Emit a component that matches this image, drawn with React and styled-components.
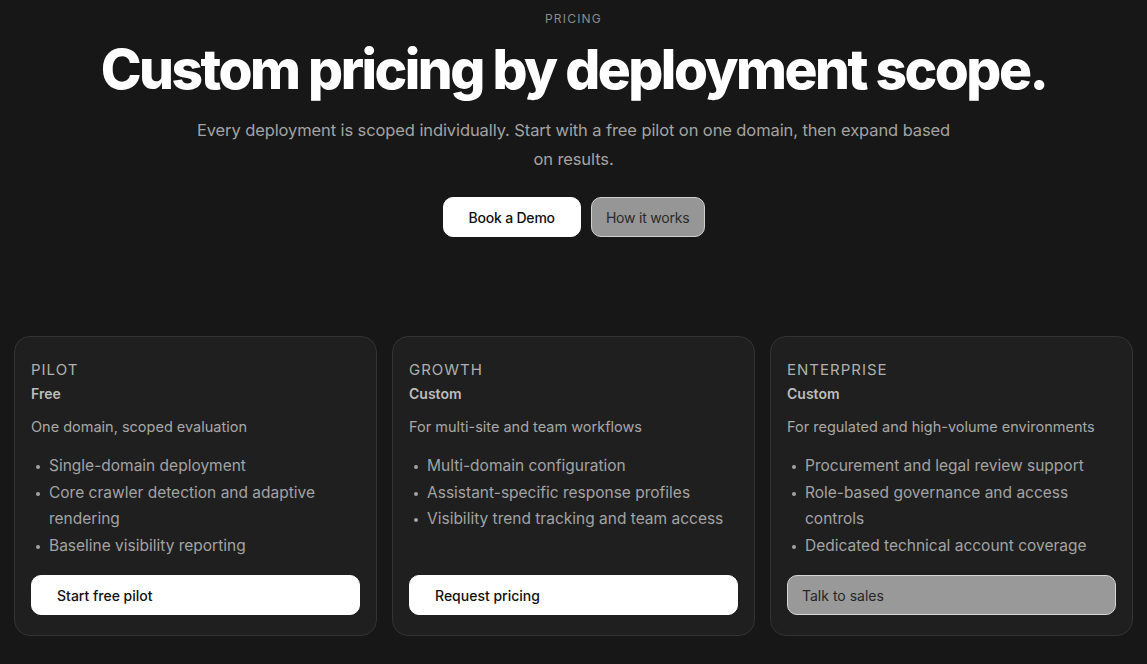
import React from "react";
import styled, { createGlobalStyle } from "styled-components";

const Global = createGlobalStyle`
  html, body { margin: 0; padding: 0; background: #171717; }
  body { font-family: Inter, "Noto Sans", sans-serif; -webkit-font-smoothing: antialiased; }
  * { box-sizing: border-box; }
`;

const Page = styled.main`
  width: 1147px;
  min-height: 664px;
  background: #171717;
  padding: 11px 14px 28px;
  display: flex;
  flex-direction: column;
  align-items: center;
`;

const Eyebrow = styled.div`
  font-family: Inter, sans-serif;
  font-size: 12px;
  line-height: 16px;
  letter-spacing: 1.2px;
  color: #8c8c8c;
  text-transform: uppercase;
`;

const Headline = styled.h1`
  margin: 11px 0 0;
  font-family: Inter, sans-serif;
  font-weight: 800;
  font-size: 55px;
  line-height: 62px;
  letter-spacing: -2.5px;
  color: #ffffff;
  text-align: center;
`;

const Lead = styled.p`
  margin: 16px 0 0;
  width: 762px;
  font-family: Inter, sans-serif;
  font-size: 16.5px;
  line-height: 29px;
  letter-spacing: -0.1px;
  color: #a3a3a3;
  text-align: center;
`;

const Actions = styled.div`
  display: flex;
  gap: 10px;
  margin-top: 23px;
`;

const HeroButton = styled.button`
  height: 40px;
  padding: 0 ${(p) => (p.$primary ? "25px" : "14px")};
  border-radius: 10px;
  font-family: Inter, sans-serif;
  font-size: 14px;
  font-weight: ${(p) => (p.$primary ? 500 : 400)};
  letter-spacing: -0.2px;
  cursor: pointer;
  background: ${(p) => (p.$primary ? "#ffffff" : "#969696")};
  color: ${(p) => (p.$primary ? "#111111" : "#2a2a2a")};
  border: 1px solid ${(p) => (p.$primary ? "#ffffff" : "#d0d0d0")};
`;

const Grid = styled.section`
  margin-top: 99px;
  width: 100%;
  display: grid;
  grid-template-columns: repeat(3, 363px);
  justify-content: space-between;
`;

const Card = styled.article`
  height: 300px;
  background: #1f1f1f;
  border: 1px solid #333333;
  border-radius: 16px;
  padding: 22px 16px 20px;
  display: flex;
  flex-direction: column;
`;

const Tier = styled.div`
  font-size: 15px;
  line-height: 22px;
  letter-spacing: 1px;
  color: #b0b0b0;
  text-transform: uppercase;
`;

const Price = styled.div`
  margin-top: 3px;
  font-size: 14px;
  font-weight: 600;
  line-height: 20px;
  color: #bdbdbd;
`;

const Summary = styled.p`
  margin: 12px 0 0;
  font-size: 14.5px;
  line-height: 22px;
  color: #a8a8a8;
`;

const Features = styled.ul`
  margin: 15px 0 0;
  padding: 0 0 0 18px;
  list-style: none;
  flex: 1;
`;

const Feature = styled.li`
  position: relative;
  font-size: 15.5px;
  line-height: 26.5px;
  color: #a3a3a3;
  &::before {
    content: "";
    position: absolute;
    left: -13px;
    top: 12px;
    width: 4px;
    height: 4px;
    border-radius: 50%;
    background: #a3a3a3;
  }
`;

const CardButton = styled.button`
  height: 40px;
  width: 100%;
  border-radius: 10px;
  padding: 0 ${(p) => (p.$ghost ? "14px" : "25px")};
  text-align: left;
  font-family: Inter, sans-serif;
  font-size: 14px;
  font-weight: ${(p) => (p.$ghost ? 400 : 500)};
  cursor: pointer;
  background: ${(p) => (p.$ghost ? "#999999" : "#ffffff")};
  color: ${(p) => (p.$ghost ? "#262626" : "#111111")};
  border: 1px solid ${(p) => (p.$ghost ? "#d6d6d6" : "#ffffff")};
`;

const plans = [
  {
    tier: "Pilot",
    price: "Free",
    summary: "One domain, scoped evaluation",
    features: [
      "Single-domain deployment",
      "Core crawler detection and adaptive rendering",
      "Baseline visibility reporting",
    ],
    cta: "Start free pilot",
  },
  {
    tier: "Growth",
    price: "Custom",
    summary: "For multi-site and team workflows",
    features: [
      "Multi-domain configuration",
      "Assistant-specific response profiles",
      "Visibility trend tracking and team access",
    ],
    cta: "Request pricing",
  },
  {
    tier: "Enterprise",
    price: "Custom",
    summary: "For regulated and high-volume environments",
    features: [
      "Procurement and legal review support",
      "Role-based governance and access controls",
      "Dedicated technical account coverage",
    ],
    cta: "Talk to sales",
    ghost: true,
  },
];

export default function App() {
  return (
    <>
      <Global />
      <Page>
        <Eyebrow>Pricing</Eyebrow>
        <Headline>Custom pricing by deployment scope.</Headline>
        <Lead>
          Every deployment is scoped individually. Start with a free pilot on one domain, then expand based on results.
        </Lead>
        <Actions>
          <HeroButton $primary>Book a Demo</HeroButton>
          <HeroButton>How it works</HeroButton>
        </Actions>
        <Grid>
          {plans.map((p) => (
            <Card key={p.tier}>
              <Tier>{p.tier}</Tier>
              <Price>{p.price}</Price>
              <Summary>{p.summary}</Summary>
              <Features>
                {p.features.map((f) => (
                  <Feature key={f}>{f}</Feature>
                ))}
              </Features>
              <CardButton $ghost={p.ghost}>{p.cta}</CardButton>
            </Card>
          ))}
        </Grid>
      </Page>
    </>
  );
}
